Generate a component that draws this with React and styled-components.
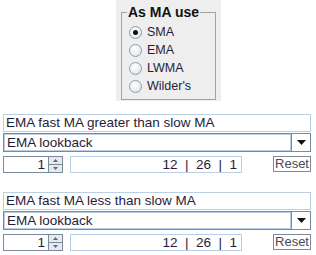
import styled, { createGlobalStyle } from "styled-components"

const Global = createGlobalStyle`
body {
    margin: 0;
    background: #ffffff;
    font-family: "Liberation Sans", Arial, sans-serif;
    font-size: 13.5px;
    color: #1e1e3c;
}
`

const options = ["SMA", "EMA", "LWMA", "Wilder's"]

const groups = [
    { title: "EMA fast MA greater than slow MA", value: "1" },
    { title: "EMA fast MA less than slow MA", value: "1" },
]

export default function App() {
    return (
        <Page>
            <Global />
            <Panel>
                <Box>
                    <Legend>As MA use</Legend>
                    {options.map((o, i) => (
                        <RadioRow key={o}>
                            <Radio checked={i === 0} />
                            <span>{o}</span>
                        </RadioRow>
                    ))}
                </Box>
            </Panel>
            {groups.map(g => (
                <Group key={g.title}>
                    <TextField>{g.title}</TextField>
                    <Combo>
                        <ComboText>EMA lookback</ComboText>
                        <ComboBtn>
                            <svg width="9" height="5" viewBox="0 0 9 5"><path d="M0 0h9L4.5 5z" fill="#111" /></svg>
                        </ComboBtn>
                    </Combo>
                    <Controls>
                        <Spinner>
                            <SpinField>{g.value}</SpinField>
                            <Arrows>
                                <ArrowBtn><svg width="5" height="3" viewBox="0 0 5 3"><path d="M0 3h5L2.5 0z" fill="#667" /></svg></ArrowBtn>
                                <ArrowBtn><svg width="5" height="3" viewBox="0 0 5 3"><path d="M0 0h5L2.5 3z" fill="#667" /></svg></ArrowBtn>
                            </Arrows>
                        </Spinner>
                        <NumField>12 &nbsp;|&nbsp; 26 &nbsp;|&nbsp; 1</NumField>
                        <ResetBtn>Reset</ResetBtn>
                    </Controls>
                </Group>
            ))}
        </Page>
    )
}

const Page = styled.div`
width: 316px;
height: 255px;
overflow: hidden;
`

const Panel = styled.div`
margin-left: 116px;
width: 105px;
height: 101px;
background: #eeeeee;
padding: 5px 5px 0 5px;
box-sizing: border-box;
`

const Box = styled.div`
margin-top: 7px;
height: 88px;
border: 1px solid #a3a3a3;
position: relative;
padding: 13px 0 0 7px;
box-sizing: border-box;
display: flex;
flex-direction: column;
gap: 5px;
`

const Legend = styled.div`
position: absolute;
top: -9px;
left: 5px;
padding: 0 1px;
background: #eeeeee;
font-weight: bold;
font-size: 14px;
line-height: 16px;
color: #111;
`

const RadioRow = styled.div`
display: flex;
align-items: center;
gap: 5px;
height: 13px;
line-height: 13px;
font-size: 12.5px;
color: #1e1e3c;
`

const Radio = styled.span`
width: 11px;
height: 11px;
border-radius: 50%;
border: 1px solid #8f9cab;
background: radial-gradient(circle at 40% 35%, #ffffff 0%, #e6edf4 60%, #c9d5e1 100%);
display: inline-flex;
align-items: center;
justify-content: center;
&::after {
    content: "";
    width: 5px;
    height: 5px;
    border-radius: 50%;
    background: #111;
    display: ${p => (p.checked ? "block" : "none")};
}
`

const Group = styled.div`
margin: 13px 0 0 3px;
width: 308px;
display: flex;
flex-direction: column;
& + & {
    margin-top: 19px;
}
`

const TextField = styled.div`
height: 18px;
border: 1px solid #b8cfe5;
box-sizing: border-box;
padding-left: 2px;
line-height: 16px;
white-space: nowrap;
`

const Combo = styled.div`
margin-top: 1px;
height: 19px;
border: 1px solid #7a8a99;
box-sizing: border-box;
display: flex;
`

const ComboText = styled.div`
flex: 1;
padding-left: 2px;
line-height: 15px;
border: 1px solid #b8cfe5;
`

const ComboBtn = styled.div`
width: 18px;
border-left: 1px solid #7a8a99;
display: flex;
align-items: center;
justify-content: center;
background: #ffffff;
`

const Controls = styled.div`
margin-top: 4px;
height: 17px;
display: flex;
align-items: flex-start;
`

const Spinner = styled.div`
display: flex;
height: 17px;
`

const SpinField = styled.div`
width: 45px;
height: 17px;
box-sizing: border-box;
border: 1px solid #7a8a99;
border-right: none;
text-align: right;
padding-right: 3px;
line-height: 15px;
`

const Arrows = styled.div`
width: 15px;
display: flex;
flex-direction: column;
border: 1px solid #7a8a99;
box-sizing: border-box;
`

const ArrowBtn = styled.div`
flex: 1;
display: flex;
align-items: center;
justify-content: center;
background: #e6e9ee;
& + & {
    border-top: 1px solid #7a8a99;
}
`

const NumField = styled.div`
margin-left: 7px;
width: 172px;
height: 17px;
box-sizing: border-box;
border: 1px solid #b8cfe5;
text-align: right;
padding-right: 4px;
line-height: 15px;
`

const ResetBtn = styled.div`
margin-left: auto;
width: 38px;
height: 16px;
box-sizing: border-box;
border: 1px solid #7a8a99;
color: #4a4a5a;
line-height: 14px;
text-align: center;
font-size: 13px;
`
